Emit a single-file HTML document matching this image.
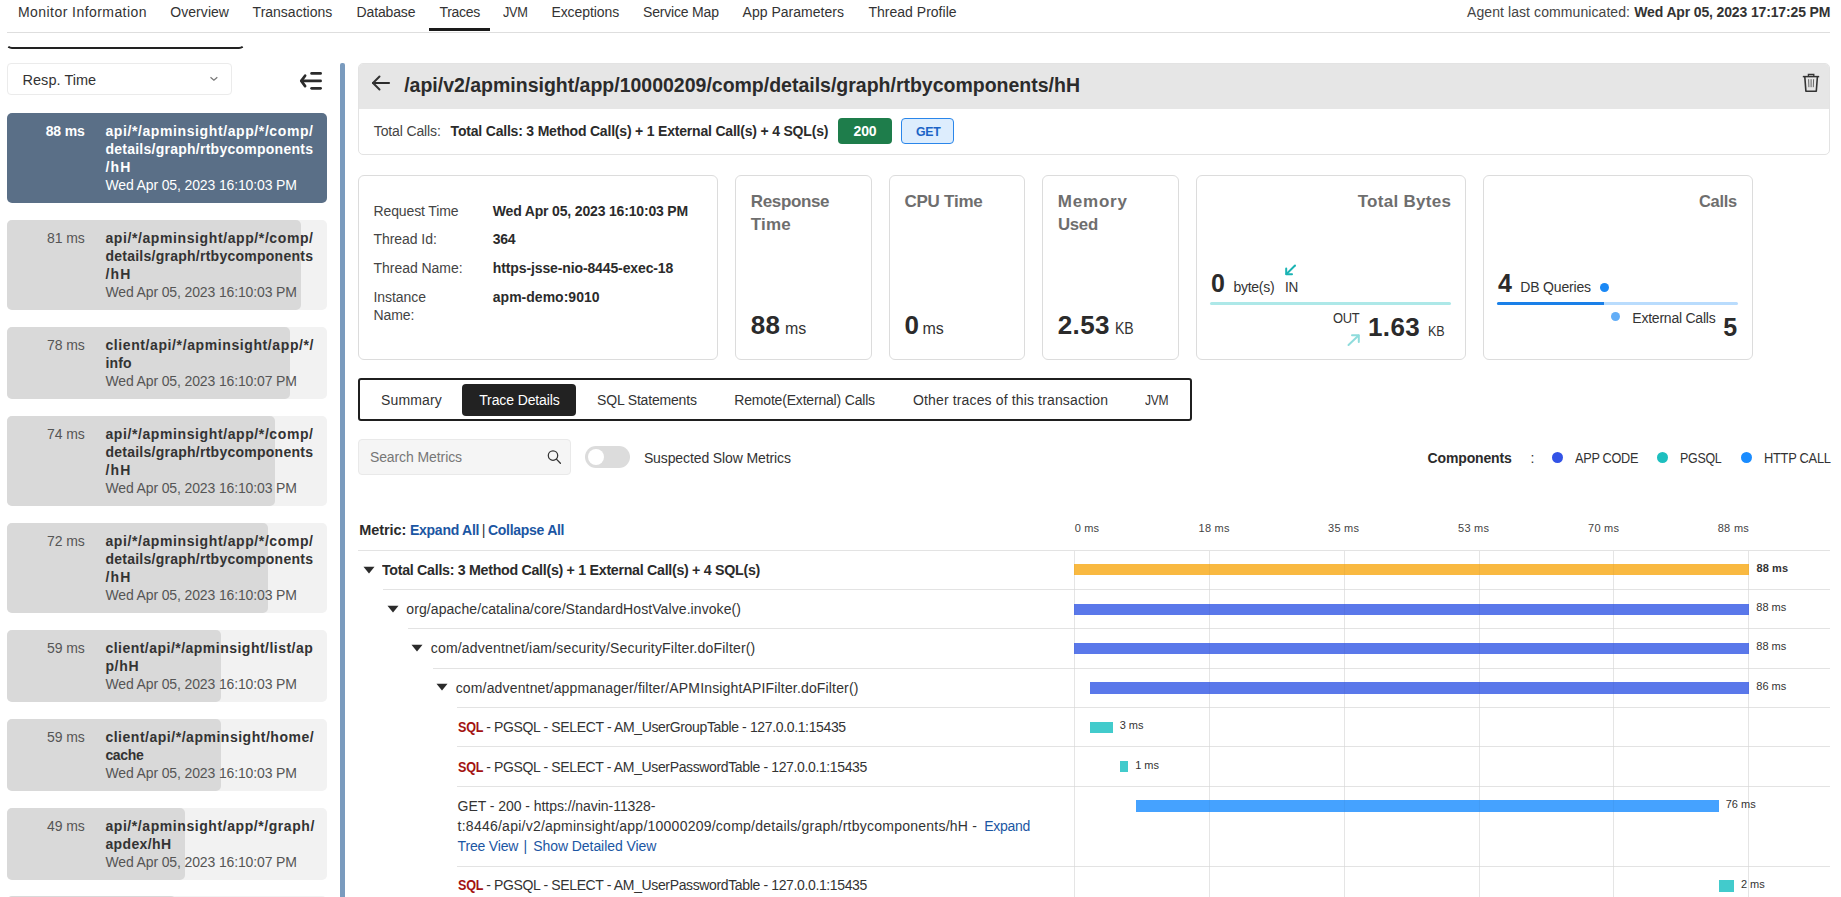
<!DOCTYPE html>
<html><head><meta charset="utf-8"><title>Trace Details</title>
<style>
html,body{margin:0;padding:0;background:#fff;width:1841px;height:897px;overflow:hidden;position:relative;font-family:'Liberation Sans', sans-serif;}
.t{position:absolute;white-space:pre;line-height:1;}

</style></head><body>
<div class="t" style="left:18.0px;top:5px;font-size:14px;font-weight:400;color:#333;letter-spacing:0.438px;">Monitor Information</div>
<div class="t" style="left:170.3px;top:5px;font-size:14px;font-weight:400;color:#333;letter-spacing:0.049px;">Overview</div>
<div class="t" style="left:252.6px;top:5px;font-size:14px;font-weight:400;color:#333;">Transactions</div>
<div class="t" style="left:356.6px;top:5px;font-size:14px;font-weight:400;color:#333;letter-spacing:-0.148px;">Database</div>
<div class="t" style="left:439.6px;top:5px;font-size:14px;font-weight:400;color:#333;letter-spacing:-0.336px;">Traces</div>
<div class="t" style="left:503.1px;top:5px;font-size:14px;font-weight:400;color:#333;letter-spacing:-0.300px;transform:scaleX(0.9107);transform-origin:0 0;">JVM</div>
<div class="t" style="left:551.4px;top:5px;font-size:14px;font-weight:400;color:#333;letter-spacing:-0.065px;">Exceptions</div>
<div class="t" style="left:643.0px;top:5px;font-size:14px;font-weight:400;color:#333;letter-spacing:-0.181px;">Service Map</div>
<div class="t" style="left:742.6px;top:5px;font-size:14px;font-weight:400;color:#333;letter-spacing:0.010px;">App Parameters</div>
<div class="t" style="left:868.4px;top:5px;font-size:14px;font-weight:400;color:#333;letter-spacing:0.020px;">Thread Profile</div>
<div style="position:absolute;left:429px;top:28px;width:61px;height:3px;background:#1a1a1a;"></div>
<div style="position:absolute;left:7px;top:32px;width:1823px;height:1px;background:#dedede;"></div>
<div class="t" style="left:1467.0px;top:5px;font-size:14px;font-weight:400;color:#444;letter-spacing:0.083px;">Agent last communicated:</div>
<div class="t" style="left:1634.3px;top:5px;font-size:14px;font-weight:700;color:#333;letter-spacing:-0.144px;">Wed Apr 05, 2023 17:17:25 PM</div>
<div style="position:absolute;left:5.5px;top:21px;width:235.5px;height:26px;border:2px solid #222;border-top:none;border-bottom-left-radius:6px;border-bottom-right-radius:6px;border-left-color:transparent;border-right-color:transparent;"></div>
<div style="position:absolute;left:7px;top:63px;width:223px;height:30px;border:1px solid #ebebeb;border-radius:4px;background:#fff;"></div>
<div class="t" style="left:22.5px;top:72.5px;font-size:14.5px;font-weight:400;color:#333;letter-spacing:0.040px;">Resp. Time</div>
<svg style="position:absolute;left:209px;top:75px" width="10" height="8" viewBox="0 0 10 8"><path d="M1.5 2.2 L4.9 5.3 L8.3 2.2" fill="none" stroke="#777" stroke-width="1.2"/></svg>
<svg style="position:absolute;left:299px;top:71px" width="25" height="20" viewBox="0 0 25 20"><path d="M12.6 2.4 H21.6" stroke="#2b2b2b" stroke-width="2.7" stroke-linecap="round"/><path d="M2.8 9.9 H21.6" stroke="#2b2b2b" stroke-width="2.7" stroke-linecap="round"/><path d="M12.6 17.3 H21.6" stroke="#2b2b2b" stroke-width="2.7" stroke-linecap="round"/><path d="M6.1 4.7 L2.3 9.9 L6.1 15.1" fill="none" stroke="#2b2b2b" stroke-width="2.7" stroke-linecap="round" stroke-linejoin="round"/></svg>
<div style="position:absolute;left:340px;top:63px;width:4.5px;height:840px;background:#7a9bbe;border-radius:2px 2px 0 0;"></div>
<div style="position:absolute;left:7px;top:113px;width:320px;height:89.5px;background:#5a6f87;border-radius:5px;"></div>
<div class="t" style="left:45.7px;top:124px;font-size:14px;font-weight:700;color:#fff;letter-spacing:-0.151px;">88 ms</div>
<div class="t" style="left:105.4px;top:124px;font-size:14px;font-weight:700;color:#fff;letter-spacing:0.602px;">api/*/apminsight/app/*/comp/</div>
<div class="t" style="left:105.4px;top:142px;font-size:14px;font-weight:700;color:#fff;letter-spacing:0.255px;">details/graph/rtbycomponents</div>
<div class="t" style="left:105.4px;top:160px;font-size:14px;font-weight:700;color:#fff;letter-spacing:1.219px;">/hH</div>
<div class="t" style="left:105.4px;top:178px;font-size:14px;font-weight:400;color:#fff;letter-spacing:-0.130px;">Wed Apr 05, 2023 16:10:03 PM</div>
<div style="position:absolute;left:7px;top:220px;width:320px;height:89.5px;background:#f2f2f2;border-radius:5px;overflow:hidden;"><div style="position:absolute;left:0;top:0;height:100%;width:293.8px;background:#d9d9d9;border-radius:0 5px 5px 0;"></div></div>
<div class="t" style="left:47.0px;top:231px;font-size:14px;font-weight:400;color:#555;letter-spacing:-0.081px;">81 ms</div>
<div class="t" style="left:105.4px;top:231px;font-size:14px;font-weight:700;color:#333;letter-spacing:0.602px;">api/*/apminsight/app/*/comp/</div>
<div class="t" style="left:105.4px;top:249px;font-size:14px;font-weight:700;color:#333;letter-spacing:0.255px;">details/graph/rtbycomponents</div>
<div class="t" style="left:105.4px;top:267px;font-size:14px;font-weight:700;color:#333;letter-spacing:1.219px;">/hH</div>
<div class="t" style="left:105.4px;top:285px;font-size:14px;font-weight:400;color:#555;letter-spacing:-0.130px;">Wed Apr 05, 2023 16:10:03 PM</div>
<div style="position:absolute;left:7px;top:327px;width:320px;height:71.5px;background:#f2f2f2;border-radius:5px;overflow:hidden;"><div style="position:absolute;left:0;top:0;height:100%;width:282.9px;background:#d9d9d9;border-radius:0 5px 5px 0;"></div></div>
<div class="t" style="left:47.0px;top:338px;font-size:14px;font-weight:400;color:#555;letter-spacing:-0.081px;">78 ms</div>
<div class="t" style="left:105.4px;top:338px;font-size:14px;font-weight:700;color:#333;letter-spacing:0.604px;">client/api/*/apminsight/app/*/</div>
<div class="t" style="left:105.4px;top:356px;font-size:14px;font-weight:700;color:#333;letter-spacing:0.148px;">info</div>
<div class="t" style="left:105.4px;top:374px;font-size:14px;font-weight:400;color:#555;letter-spacing:-0.130px;">Wed Apr 05, 2023 16:10:07 PM</div>
<div style="position:absolute;left:7px;top:416px;width:320px;height:89.5px;background:#f2f2f2;border-radius:5px;overflow:hidden;"><div style="position:absolute;left:0;top:0;height:100%;width:268.4px;background:#d9d9d9;border-radius:0 5px 5px 0;"></div></div>
<div class="t" style="left:47.0px;top:427px;font-size:14px;font-weight:400;color:#555;letter-spacing:-0.081px;">74 ms</div>
<div class="t" style="left:105.4px;top:427px;font-size:14px;font-weight:700;color:#333;letter-spacing:0.602px;">api/*/apminsight/app/*/comp/</div>
<div class="t" style="left:105.4px;top:445px;font-size:14px;font-weight:700;color:#333;letter-spacing:0.255px;">details/graph/rtbycomponents</div>
<div class="t" style="left:105.4px;top:463px;font-size:14px;font-weight:700;color:#333;letter-spacing:1.219px;">/hH</div>
<div class="t" style="left:105.4px;top:481px;font-size:14px;font-weight:400;color:#555;letter-spacing:-0.130px;">Wed Apr 05, 2023 16:10:03 PM</div>
<div style="position:absolute;left:7px;top:523px;width:320px;height:89.5px;background:#f2f2f2;border-radius:5px;overflow:hidden;"><div style="position:absolute;left:0;top:0;height:100%;width:261.1px;background:#d9d9d9;border-radius:0 5px 5px 0;"></div></div>
<div class="t" style="left:47.0px;top:534px;font-size:14px;font-weight:400;color:#555;letter-spacing:-0.081px;">72 ms</div>
<div class="t" style="left:105.4px;top:534px;font-size:14px;font-weight:700;color:#333;letter-spacing:0.602px;">api/*/apminsight/app/*/comp/</div>
<div class="t" style="left:105.4px;top:552px;font-size:14px;font-weight:700;color:#333;letter-spacing:0.255px;">details/graph/rtbycomponents</div>
<div class="t" style="left:105.4px;top:570px;font-size:14px;font-weight:700;color:#333;letter-spacing:1.219px;">/hH</div>
<div class="t" style="left:105.4px;top:588px;font-size:14px;font-weight:400;color:#555;letter-spacing:-0.130px;">Wed Apr 05, 2023 16:10:03 PM</div>
<div style="position:absolute;left:7px;top:630px;width:320px;height:71.5px;background:#f2f2f2;border-radius:5px;overflow:hidden;"><div style="position:absolute;left:0;top:0;height:100%;width:214.0px;background:#d9d9d9;border-radius:0 5px 5px 0;"></div></div>
<div class="t" style="left:47.0px;top:641px;font-size:14px;font-weight:400;color:#555;letter-spacing:-0.081px;">59 ms</div>
<div class="t" style="left:105.4px;top:641px;font-size:14px;font-weight:700;color:#333;letter-spacing:0.482px;">client/api/*/apminsight/list/ap</div>
<div class="t" style="left:105.4px;top:659px;font-size:14px;font-weight:700;color:#333;letter-spacing:0.664px;">p/hH</div>
<div class="t" style="left:105.4px;top:677px;font-size:14px;font-weight:400;color:#555;letter-spacing:-0.130px;">Wed Apr 05, 2023 16:10:03 PM</div>
<div style="position:absolute;left:7px;top:719px;width:320px;height:71.5px;background:#f2f2f2;border-radius:5px;overflow:hidden;"><div style="position:absolute;left:0;top:0;height:100%;width:214.0px;background:#d9d9d9;border-radius:0 5px 5px 0;"></div></div>
<div class="t" style="left:47.0px;top:730px;font-size:14px;font-weight:400;color:#555;letter-spacing:-0.081px;">59 ms</div>
<div class="t" style="left:105.4px;top:730px;font-size:14px;font-weight:700;color:#333;letter-spacing:0.521px;">client/api/*/apminsight/home/</div>
<div class="t" style="left:105.4px;top:748px;font-size:14px;font-weight:700;color:#333;letter-spacing:-0.326px;">cache</div>
<div class="t" style="left:105.4px;top:766px;font-size:14px;font-weight:400;color:#555;letter-spacing:-0.130px;">Wed Apr 05, 2023 16:10:03 PM</div>
<div style="position:absolute;left:7px;top:808px;width:320px;height:71.5px;background:#f2f2f2;border-radius:5px;overflow:hidden;"><div style="position:absolute;left:0;top:0;height:100%;width:177.7px;background:#d9d9d9;border-radius:0 5px 5px 0;"></div></div>
<div class="t" style="left:47.0px;top:819px;font-size:14px;font-weight:400;color:#555;letter-spacing:-0.081px;">49 ms</div>
<div class="t" style="left:105.4px;top:819px;font-size:14px;font-weight:700;color:#333;letter-spacing:0.574px;">api/*/apminsight/app/*/graph/</div>
<div class="t" style="left:105.4px;top:837px;font-size:14px;font-weight:700;color:#333;letter-spacing:0.383px;">apdex/hH</div>
<div class="t" style="left:105.4px;top:855px;font-size:14px;font-weight:400;color:#555;letter-spacing:-0.130px;">Wed Apr 05, 2023 16:10:07 PM</div>
<div style="position:absolute;left:7px;top:896px;width:320px;height:60px;background:#f2f2f2;border-radius:5px;overflow:hidden;"><div style="position:absolute;left:0;top:0;height:100%;width:169px;background:#d9d9d9;border-radius:0 5px 5px 0;"></div></div>
<div style="position:absolute;left:358px;top:63px;width:1470px;height:90px;border:1px solid #e3e3e3;border-radius:5px;background:#fff;overflow:hidden;"><div style="position:absolute;left:0;top:0;width:100%;height:45px;background:#e6e6e6;"></div></div>
<svg style="position:absolute;left:370px;top:74px" width="22" height="18" viewBox="0 0 22 18"><path d="M19 9 H3" stroke="#2b2b2b" stroke-width="2.1" stroke-linecap="round"/><path d="M9.5 2.5 L3 9 L9.5 15.5" fill="none" stroke="#333" stroke-width="2" stroke-linecap="round" stroke-linejoin="round"/></svg>
<div class="t" style="left:404.2px;top:75.5px;font-size:19.5px;font-weight:700;color:#2b2b2b;letter-spacing:-0.006px;">/api/v2/apminsight/app/10000209/comp/details/graph/rtbycomponents/hH</div>
<svg style="position:absolute;left:1802px;top:73px" width="18" height="20" viewBox="0 0 18 20"><path d="M0.8 3.6 H17.2" stroke="#333" stroke-width="1.5"/><path d="M6.4 3.3 V1.5 H11.8 V3.3" fill="none" stroke="#333" stroke-width="1.3"/><path d="M2.8 3.8 L3.9 18.2 H14.3 L15.4 3.8" fill="none" stroke="#333" stroke-width="1.6" stroke-linejoin="round"/><path d="M6.6 6.2 L6.9 14.2 M9.1 6.2 V14.2 M11.6 6.2 L11.3 14.2" stroke="#444" stroke-width="0.8"/></svg>
<div class="t" style="left:373.8px;top:124px;font-size:14px;font-weight:400;color:#444;letter-spacing:-0.134px;">Total Calls:</div>
<div class="t" style="left:450.6px;top:124px;font-size:14px;font-weight:700;color:#2b2b2b;letter-spacing:-0.195px;">Total Calls: 3 Method Call(s) + 1 External Call(s) + 4 SQL(s)</div>
<div style="position:absolute;left:838px;top:118px;width:54px;height:26px;background:#1e7d4b;border-radius:4px;"></div>
<div class="t" style="left:853.6px;top:124px;font-size:14px;font-weight:700;color:#fff;letter-spacing:-0.180px;">200</div>
<div style="position:absolute;left:901px;top:118px;width:51px;height:23.5px;background:#ddedfd;border:1.5px solid #2a86ea;border-radius:4px;"></div>
<div class="t" style="left:916.2px;top:125px;font-size:13.5px;font-weight:700;color:#1b63c6;letter-spacing:-0.300px;transform:scaleX(0.9112);transform-origin:0 0;">GET</div>
<div style="position:absolute;left:358px;top:175px;width:360px;height:185px;border:1px solid #dcdcdc;border-radius:6px;background:#fff;box-sizing:border-box;"></div>
<div style="position:absolute;left:735px;top:175px;width:137px;height:185px;border:1px solid #dcdcdc;border-radius:6px;background:#fff;box-sizing:border-box;"></div>
<div style="position:absolute;left:889px;top:175px;width:136px;height:185px;border:1px solid #dcdcdc;border-radius:6px;background:#fff;box-sizing:border-box;"></div>
<div style="position:absolute;left:1042px;top:175px;width:137px;height:185px;border:1px solid #dcdcdc;border-radius:6px;background:#fff;box-sizing:border-box;"></div>
<div style="position:absolute;left:1196px;top:175px;width:270px;height:185px;border:1px solid #dcdcdc;border-radius:6px;background:#fff;box-sizing:border-box;"></div>
<div style="position:absolute;left:1483px;top:175px;width:270px;height:185px;border:1px solid #dcdcdc;border-radius:6px;background:#fff;box-sizing:border-box;"></div>
<div class="t" style="left:373.5px;top:203.5px;font-size:14px;font-weight:400;color:#444;letter-spacing:-0.124px;">Request Time</div>
<div class="t" style="left:492.8px;top:203.5px;font-size:14px;font-weight:700;color:#2b2b2b;letter-spacing:-0.170px;">Wed Apr 05, 2023 16:10:03 PM</div>
<div class="t" style="left:373.5px;top:232px;font-size:14px;font-weight:400;color:#444;letter-spacing:-0.059px;">Thread Id:</div>
<div class="t" style="left:492.8px;top:232px;font-size:14px;font-weight:700;color:#2b2b2b;letter-spacing:-0.254px;">364</div>
<div class="t" style="left:373.5px;top:261px;font-size:14px;font-weight:400;color:#444;letter-spacing:-0.033px;">Thread Name:</div>
<div class="t" style="left:492.8px;top:261px;font-size:14px;font-weight:700;color:#2b2b2b;letter-spacing:-0.120px;">https-jsse-nio-8445-exec-18</div>
<div class="t" style="left:373.5px;top:290px;font-size:14px;font-weight:400;color:#444;letter-spacing:-0.054px;">Instance</div>
<div class="t" style="left:492.8px;top:290px;font-size:14px;font-weight:700;color:#2b2b2b;letter-spacing:0.010px;">apm-demo:9010</div>
<div class="t" style="left:373.5px;top:308px;font-size:14px;font-weight:400;color:#444;letter-spacing:-0.082px;">Name:</div>
<div class="t" style="left:750.8px;top:192.5px;font-size:17px;font-weight:700;color:#6e6e6e;letter-spacing:-0.364px;">Response</div>
<div class="t" style="left:750.8px;top:215.5px;font-size:17px;font-weight:700;color:#6e6e6e;letter-spacing:0.208px;">Time</div>
<div class="t" style="left:750.8px;top:312px;font-size:26px;font-weight:700;color:#2b2b2b;letter-spacing:0.178px;">88</div>
<div class="t" style="left:784.9px;top:321px;font-size:16px;font-weight:400;color:#333;">ms</div>
<div class="t" style="left:904.4px;top:192.5px;font-size:17px;font-weight:700;color:#6e6e6e;letter-spacing:-0.229px;">CPU Time</div>
<div class="t" style="left:904.4px;top:312px;font-size:26px;font-weight:700;color:#2b2b2b;">0</div>
<div class="t" style="left:922.5px;top:321px;font-size:16px;font-weight:400;color:#333;">ms</div>
<div class="t" style="left:1057.7px;top:192.5px;font-size:17px;font-weight:700;color:#6e6e6e;letter-spacing:0.822px;">Memory</div>
<div class="t" style="left:1057.7px;top:215.5px;font-size:17px;font-weight:700;color:#6e6e6e;letter-spacing:-0.300px;transform:scaleX(0.9874);transform-origin:0 0;">Used</div>
<div class="t" style="left:1057.7px;top:312.2px;font-size:26px;font-weight:700;color:#2b2b2b;letter-spacing:0.430px;">2.53</div>
<div class="t" style="left:1115.0px;top:321.2px;font-size:16px;font-weight:400;color:#333;letter-spacing:-0.300px;transform:scaleX(0.8808);transform-origin:0 0;">KB</div>
<div class="t" style="left:1357.7px;top:192.5px;font-size:17px;font-weight:700;color:#6e6e6e;letter-spacing:0.283px;">Total Bytes</div>
<div class="t" style="left:1211.0px;top:271px;font-size:25px;font-weight:700;color:#2b2b2b;">0</div>
<div class="t" style="left:1233.4px;top:280px;font-size:14px;font-weight:400;color:#333;letter-spacing:-0.249px;">byte(s)</div>
<div class="t" style="left:1285.2px;top:280px;font-size:14.5px;font-weight:400;color:#333;letter-spacing:-0.300px;transform:scaleX(0.9310);transform-origin:0 0;">IN</div>
<svg style="position:absolute;left:1284px;top:264px" width="13" height="12" viewBox="0 0 13 12"><path d="M11 1.5 L2.5 10" stroke="#1ab3b3" stroke-width="2" stroke-linecap="round"/><path d="M2.2 4.5 V10.2 H8" fill="none" stroke="#1ab3b3" stroke-width="2" stroke-linecap="round" stroke-linejoin="round"/></svg>
<div style="position:absolute;left:1210px;top:301.5px;width:241px;height:3.5px;background:#ade8e8;border-radius:2px;"></div>
<div class="t" style="left:1332.6px;top:311.2px;font-size:14px;font-weight:400;color:#333;letter-spacing:-0.300px;transform:scaleX(0.9235);transform-origin:0 0;">OUT</div>
<div class="t" style="left:1368.0px;top:314px;font-size:26px;font-weight:700;color:#2b2b2b;letter-spacing:0.397px;">1.63</div>
<div class="t" style="left:1427.7px;top:323px;font-size:15px;font-weight:400;color:#333;letter-spacing:-0.300px;transform:scaleX(0.8393);transform-origin:0 0;">KB</div>
<svg style="position:absolute;left:1346px;top:333px" width="15" height="14" viewBox="0 0 15 14"><path d="M2.5 12 L12.5 2.5" stroke="#8fdcdc" stroke-width="2" stroke-linecap="round"/><path d="M6 2.2 H12.8 V9" fill="none" stroke="#8fdcdc" stroke-width="2" stroke-linecap="round" stroke-linejoin="round"/></svg>
<div class="t" style="left:1699.3px;top:192.5px;font-size:17px;font-weight:700;color:#6e6e6e;letter-spacing:-0.300px;transform:scaleX(0.9670);transform-origin:0 0;">Calls</div>
<div class="t" style="left:1497.9px;top:271px;font-size:25px;font-weight:700;color:#2b2b2b;">4</div>
<div class="t" style="left:1520.3px;top:280px;font-size:14px;font-weight:400;color:#333;letter-spacing:-0.173px;">DB Queries</div>
<div style="position:absolute;left:1599.7px;top:283px;width:9.4px;height:9.4px;border-radius:50%;background:#1a88f5;"></div>
<div style="position:absolute;left:1497px;top:301.5px;width:240.5px;height:3.5px;background:#b9dcfd;border-radius:2px;"></div>
<div style="position:absolute;left:1497px;top:301.5px;width:107px;height:3.5px;background:#1a80e8;border-radius:2px 0 0 2px;"></div>
<div style="position:absolute;left:1610.7px;top:311.6px;width:9.4px;height:9.4px;border-radius:50%;background:#63aef7;"></div>
<div class="t" style="left:1632.3px;top:311px;font-size:14px;font-weight:400;color:#333;letter-spacing:-0.229px;">External Calls</div>
<div class="t" style="left:1723.3px;top:314.5px;font-size:25px;font-weight:700;color:#2b2b2b;">5</div>
<div style="position:absolute;left:358px;top:378px;width:834px;height:43px;border:2px solid #1f1f1f;border-radius:3px;box-sizing:border-box;"></div>
<div style="position:absolute;left:462px;top:384px;width:114px;height:31.5px;background:#222;border-radius:4px;"></div>
<div class="t" style="left:381.0px;top:393px;font-size:14px;font-weight:400;color:#333;letter-spacing:0.149px;">Summary</div>
<div class="t" style="left:479.2px;top:393px;font-size:14px;font-weight:400;color:#fff;letter-spacing:-0.113px;">Trace Details</div>
<div class="t" style="left:597.1px;top:393px;font-size:14px;font-weight:400;color:#333;letter-spacing:-0.185px;">SQL Statements</div>
<div class="t" style="left:734.3px;top:393px;font-size:14px;font-weight:400;color:#333;letter-spacing:-0.187px;">Remote(External) Calls</div>
<div class="t" style="left:913.0px;top:393px;font-size:14px;font-weight:400;color:#333;letter-spacing:0.141px;">Other traces of this transaction</div>
<div class="t" style="left:1145.0px;top:393px;font-size:14px;font-weight:400;color:#333;letter-spacing:-0.300px;transform:scaleX(0.8607);transform-origin:0 0;">JVM</div>
<div style="position:absolute;left:358px;top:439px;width:213px;height:36px;border:1px solid #e9e9e9;border-radius:4px;background:#f5f5f5;box-sizing:border-box;"></div>
<div class="t" style="left:369.9px;top:450.3px;font-size:14px;font-weight:400;color:#777;letter-spacing:-0.089px;">Search Metrics</div>
<svg style="position:absolute;left:546px;top:449px" width="17" height="17" viewBox="0 0 17 17"><circle cx="7" cy="6.6" r="4.7" fill="none" stroke="#333" stroke-width="1.25"/><path d="M10.4 10.1 L14.4 14.2" stroke="#333" stroke-width="1.3" stroke-linecap="round"/></svg>
<div style="position:absolute;left:585px;top:446px;width:45px;height:22px;border-radius:11px;background:#dcdcdc;"></div>
<div style="position:absolute;left:587.6px;top:448.6px;width:16.4px;height:16.4px;border-radius:50%;background:#fff;"></div>
<div class="t" style="left:643.9px;top:451px;font-size:14px;font-weight:400;color:#333;letter-spacing:-0.110px;">Suspected Slow Metrics</div>
<div class="t" style="left:1427.6px;top:450.6px;font-size:14px;font-weight:700;color:#2b2b2b;letter-spacing:-0.151px;">Components</div>
<div class="t" style="left:1530.6px;top:450.6px;font-size:14px;font-weight:400;color:#333;">:</div>
<div style="position:absolute;left:1552.0px;top:451.7px;width:11px;height:11px;border-radius:50%;background:#3353e6;"></div>
<div class="t" style="left:1575.0px;top:450.6px;font-size:14px;font-weight:400;color:#333;letter-spacing:-0.300px;transform:scaleX(0.9070);transform-origin:0 0;">APP CODE</div>
<div style="position:absolute;left:1656.9px;top:451.7px;width:11px;height:11px;border-radius:50%;background:#1dbfbf;"></div>
<div class="t" style="left:1680.4px;top:450.6px;font-size:14px;font-weight:400;color:#333;letter-spacing:-0.300px;transform:scaleX(0.8870);transform-origin:0 0;">PGSQL</div>
<div style="position:absolute;left:1740.5px;top:451.7px;width:11px;height:11px;border-radius:50%;background:#1a8cff;"></div>
<div class="t" style="left:1763.5px;top:450.6px;font-size:14px;font-weight:400;color:#333;letter-spacing:-0.300px;transform:scaleX(0.9200);transform-origin:0 0;">HTTP CALL</div>
<div class="t" style="left:359.2px;top:523px;font-size:14.5px;font-weight:700;color:#2b2b2b;letter-spacing:-0.071px;">Metric:</div>
<div class="t" style="left:410.4px;top:523px;font-size:14.5px;font-weight:700;color:#1b56a3;letter-spacing:-0.300px;transform:scaleX(0.9679);transform-origin:0 0;">Expand All</div>
<div class="t" style="left:481.8px;top:523px;font-size:14.5px;font-weight:400;color:#333;">|</div>
<div class="t" style="left:488.2px;top:523px;font-size:14.5px;font-weight:700;color:#1b56a3;letter-spacing:-0.300px;transform:scaleX(0.9664);transform-origin:0 0;">Collapse All</div>
<div class="t" style="left:1074.7px;top:523px;font-size:11px;font-weight:400;color:#444;letter-spacing:0.185px;">0 ms</div>
<div class="t" style="left:1198.5px;top:523px;font-size:11px;font-weight:400;color:#444;letter-spacing:0.258px;">18 ms</div>
<div class="t" style="left:1328.0px;top:523px;font-size:11px;font-weight:400;color:#444;letter-spacing:0.258px;">35 ms</div>
<div class="t" style="left:1458.1px;top:523px;font-size:11px;font-weight:400;color:#444;letter-spacing:0.233px;">53 ms</div>
<div class="t" style="left:1588.1px;top:523px;font-size:11px;font-weight:400;color:#444;letter-spacing:0.233px;">70 ms</div>
<div class="t" style="left:1717.7px;top:523px;font-size:11px;font-weight:400;color:#444;letter-spacing:0.308px;">88 ms</div>
<div style="position:absolute;left:358px;top:550px;width:1472px;height:1px;background:#e3e3e3;"></div>
<div style="position:absolute;left:1074px;top:551px;width:1px;height:346px;background:#eeeeee;"></div>
<div style="position:absolute;left:1209px;top:551px;width:1px;height:346px;background:#eeeeee;"></div>
<div style="position:absolute;left:1344px;top:551px;width:1px;height:346px;background:#eeeeee;"></div>
<div style="position:absolute;left:1479px;top:551px;width:1px;height:346px;background:#eeeeee;"></div>
<div style="position:absolute;left:1613px;top:551px;width:1px;height:346px;background:#eeeeee;"></div>
<div style="position:absolute;left:1748px;top:551px;width:1px;height:346px;background:#eeeeee;"></div>
<div style="position:absolute;left:383px;top:589px;width:1447px;height:1px;background:#e3e3e3;"></div>
<div style="position:absolute;left:408px;top:628px;width:1422px;height:1px;background:#e3e3e3;"></div>
<div style="position:absolute;left:433px;top:668px;width:1397px;height:1px;background:#e3e3e3;"></div>
<div style="position:absolute;left:457px;top:707px;width:1373px;height:1px;background:#e3e3e3;"></div>
<div style="position:absolute;left:457px;top:746px;width:1373px;height:1px;background:#e3e3e3;"></div>
<div style="position:absolute;left:457px;top:786px;width:1373px;height:1px;background:#e3e3e3;"></div>
<div style="position:absolute;left:457px;top:866px;width:1373px;height:1px;background:#e3e3e3;"></div>
<svg style="position:absolute;left:363px;top:565.5px" width="12" height="8" viewBox="0 0 12 8"><path d="M0.5 0.8 H11.5 L6 7.5 Z" fill="#2b2b2b"/></svg>
<div class="t" style="left:381.5px;top:563px;font-size:14.5px;font-weight:700;color:#2b2b2b;letter-spacing:-0.300px;transform:scaleX(0.9814);transform-origin:0 0;">Total Calls: 3 Method Call(s) + 1 External Call(s) + 4 SQL(s)</div>
<svg style="position:absolute;left:386.5px;top:604.5px" width="12" height="8" viewBox="0 0 12 8"><path d="M0.5 0.8 H11.5 L6 7.5 Z" fill="#2b2b2b"/></svg>
<div class="t" style="left:406.3px;top:602px;font-size:14px;font-weight:400;color:#333;letter-spacing:0.084px;">org/apache/catalina/core/StandardHostValve.invoke()</div>
<svg style="position:absolute;left:411.3px;top:643.5px" width="12" height="8" viewBox="0 0 12 8"><path d="M0.5 0.8 H11.5 L6 7.5 Z" fill="#2b2b2b"/></svg>
<div class="t" style="left:430.8px;top:641px;font-size:14px;font-weight:400;color:#333;letter-spacing:0.184px;">com/adventnet/iam/security/SecurityFilter.doFilter()</div>
<svg style="position:absolute;left:436.3px;top:683px" width="12" height="8" viewBox="0 0 12 8"><path d="M0.5 0.8 H11.5 L6 7.5 Z" fill="#2b2b2b"/></svg>
<div class="t" style="left:455.7px;top:680.5px;font-size:14px;font-weight:400;color:#333;letter-spacing:0.160px;">com/adventnet/appmanager/filter/APMInsightAPIFilter.doFilter()</div>
<div class="t" style="left:457.6px;top:720px;font-size:14.5px;font-weight:700;color:#a31212;letter-spacing:-0.300px;transform:scaleX(0.8674);transform-origin:0 0;">SQL</div>
<div class="t" style="left:486.2px;top:720px;font-size:14px;font-weight:400;color:#333;letter-spacing:-0.359px;">- PGSQL - SELECT - AM_UserGroupTable - 127.0.0.1:15435</div>
<div class="t" style="left:457.6px;top:759.5px;font-size:14.5px;font-weight:700;color:#a31212;letter-spacing:-0.300px;transform:scaleX(0.8674);transform-origin:0 0;">SQL</div>
<div class="t" style="left:486.2px;top:759.5px;font-size:14px;font-weight:400;color:#333;letter-spacing:-0.364px;">- PGSQL - SELECT - AM_UserPasswordTable - 127.0.0.1:15435</div>
<div class="t" style="left:457.6px;top:799px;font-size:14px;font-weight:400;color:#333;letter-spacing:-0.051px;">GET - 200 - https://navin-11328-</div>
<div class="t" style="left:457.6px;top:819px;font-size:14px;font-weight:400;color:#333;letter-spacing:0.242px;">t:8446/api/v2/apminsight/app/10000209/comp/details/graph/rtbycomponents/hH -</div>
<div class="t" style="left:984.2px;top:819px;font-size:14px;font-weight:400;color:#1b56a3;letter-spacing:-0.297px;">Expand</div>
<div class="t" style="left:457.6px;top:838.5px;font-size:14px;font-weight:400;color:#1b56a3;letter-spacing:-0.176px;">Tree View</div>
<div class="t" style="left:523.5px;top:838.5px;font-size:14px;font-weight:400;color:#1b56a3;">|</div>
<div class="t" style="left:533.3px;top:838.5px;font-size:14px;font-weight:400;color:#1b56a3;letter-spacing:-0.074px;">Show Detailed View</div>
<div class="t" style="left:457.6px;top:878px;font-size:14.5px;font-weight:700;color:#a31212;letter-spacing:-0.300px;transform:scaleX(0.8674);transform-origin:0 0;">SQL</div>
<div class="t" style="left:486.2px;top:878px;font-size:14px;font-weight:400;color:#333;letter-spacing:-0.364px;">- PGSQL - SELECT - AM_UserPasswordTable - 127.0.0.1:15435</div>
<div style="position:absolute;left:1074px;top:564px;width:675px;height:11px;background:#f9b941;"></div>
<div class="t" style="left:1756.5px;top:562.5px;font-size:11px;font-weight:700;color:#333;letter-spacing:0.095px;">88 ms</div>
<div style="position:absolute;left:1074px;top:603.5px;width:675px;height:11.0px;background:#5a78ea;"></div>
<div class="t" style="left:1756.3px;top:601.5px;font-size:11px;font-weight:400;color:#333;">88 ms</div>
<div style="position:absolute;left:1074px;top:643px;width:675px;height:11px;background:#5a78ea;"></div>
<div class="t" style="left:1756.3px;top:640.5px;font-size:11px;font-weight:400;color:#333;">88 ms</div>
<div style="position:absolute;left:1090px;top:682px;width:659px;height:11.5px;background:#5a78ea;"></div>
<div class="t" style="left:1756.3px;top:680.5px;font-size:11px;font-weight:400;color:#333;">86 ms</div>
<div style="position:absolute;left:1090px;top:722px;width:23px;height:10.5px;background:#42cbcc;"></div>
<div class="t" style="left:1119.7px;top:720px;font-size:11px;font-weight:400;color:#333;">3 ms</div>
<div style="position:absolute;left:1120px;top:760.5px;width:8px;height:11.0px;background:#42cbcc;"></div>
<div class="t" style="left:1135.2px;top:759.5px;font-size:11px;font-weight:400;color:#333;">1 ms</div>
<div style="position:absolute;left:1136px;top:800px;width:583px;height:12px;background:#45a2ff;"></div>
<div class="t" style="left:1725.7px;top:799px;font-size:11px;font-weight:400;color:#333;">76 ms</div>
<div style="position:absolute;left:1719px;top:880px;width:15px;height:12px;background:#42cbcc;"></div>
<div class="t" style="left:1740.9px;top:879px;font-size:11px;font-weight:400;color:#333;">2 ms</div>
<div style="position:absolute;left:1074px;top:551px;width:1px;height:346px;background:rgba(0,0,0,0.035);"></div>
<div style="position:absolute;left:1209px;top:551px;width:1px;height:346px;background:rgba(0,0,0,0.035);"></div>
<div style="position:absolute;left:1344px;top:551px;width:1px;height:346px;background:rgba(0,0,0,0.035);"></div>
<div style="position:absolute;left:1479px;top:551px;width:1px;height:346px;background:rgba(0,0,0,0.035);"></div>
<div style="position:absolute;left:1613px;top:551px;width:1px;height:346px;background:rgba(0,0,0,0.035);"></div>
<div style="position:absolute;left:1748px;top:551px;width:1px;height:346px;background:rgba(0,0,0,0.035);"></div>
</body></html>
